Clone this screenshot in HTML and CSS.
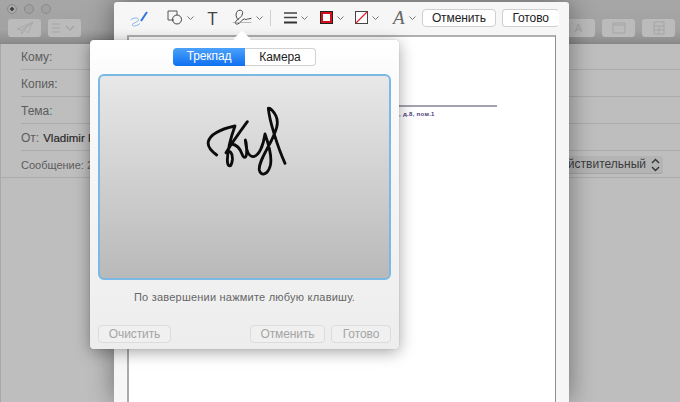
FILE: index.html
```html
<!DOCTYPE html>
<html lang="ru">
<head>
<meta charset="utf-8">
<title>Подпись</title>
<link rel="stylesheet" href="styles.css">
</head>
<body>
<div class="mail">
  <header class="mail-bar">
    <div class="lights"><i class="light light-on"></i><i class="light"></i><i class="light"></i></div>
    <div class="mail-tools">
      <div class="mail-left">
        <span class="mbtn mbtn-send"><svg width="18" height="14" viewBox="0 0 18 14"><path d="M1 8 L17 1 L12 12 L8 9 L6 13 L5.500 9 Z M5.500 9 L17 1 M8 9 L17 1" fill="none" stroke="#a9a9a9"/></svg></span>
        <span class="mbtn mbtn-list"><svg width="26" height="10" viewBox="0 0 26 10"><path d="M0 1H8M0 5H8M0 9H8" stroke="#a5a5a5"/><path d="M14 3L18 7L22 3" fill="none" stroke="#a5a5a5" stroke-width="1.500"/></svg></span>
      </div>
      <div class="mail-right">
        <span class="mbtn mbtn-a">A</span>
        <span class="mbtn mbtn-w"><svg width="14" height="12" viewBox="0 0 14 12"><path d="M1 1H13V11H1ZM1 3H13" fill="none" stroke="#a5a5a5"/></svg></span>
        <span class="mbtn mbtn-w"><svg width="12" height="14" viewBox="0 0 12 14"><path d="M1 1H11V13H1ZM1 5H11M1 9H11M6 5V13" fill="none" stroke="#a5a5a5"/></svg></span>
      </div>
    </div>
  </header>
  <div class="row"><span class="lab">Кому:</span></div>
  <div class="row"><span class="lab">Копия:</span></div>
  <div class="row"><span class="lab">Тема:</span></div>
  <div class="row"><span class="lab">От:</span><b class="from">Vladimir K</b></div>
  <div class="row row-last">
    <span class="lab">Сообщение: 2</span>
    <span class="select">Действительный<svg width="9" height="14" viewBox="0 0 9 14"><path d="M1 5L4.500 1.500L8 5M1 9L4.500 12.500L8 9" fill="none" stroke="#333" stroke-width="1.400"/></svg></span>
  </div>
</div>

<section class="sheet">
  <div class="toolbar">
    <svg class="t-sketch" width="18" height="16" viewBox="0 0 18 16"><path d="M.5 9C3 6.500 9 6 8.500 9C8 11 2 12.500 2 14C3 16 8 14.500 10 12.500" fill="none" stroke="#8db2ee" stroke-width="1"/><path d="M11 10L17 1" stroke="#2f74e0" stroke-width="2"/></svg>
    <span class="tool t-shape"><svg width="16" height="15" viewBox="0 0 16 15"><path d="M7 10H1V1H10V5" fill="none" stroke="#555" stroke-width="1"/><circle cx="10" cy="9.500" r="4.500" fill="none" stroke="#444" stroke-width="1"/></svg><svg class="chev" width="7" height="4" viewBox="0 0 7 4"><path d="M.5.500L3.500 3.500L6.500.500" fill="none" stroke="#777"/></svg></span>
    <span class="tool-t">T</span>
    <span class="tool t-sign"><svg width="20" height="17" viewBox="20 15 60 50"><path d="M40 48C28 38 30 18 45 18C58 20 50 38 42 42C30 50 25 60 36 60C45 58 50 45 58 44C62 44 60 50 64 46C68 42 72 46 78 42" fill="none" stroke="#444" stroke-width="3"/><path d="M22 55H78" stroke="#999" stroke-width="2"/></svg><svg class="chev" width="7" height="4" viewBox="0 0 7 4"><path d="M.5.500L3.500 3.500L6.500.500" fill="none" stroke="#777"/></svg></span>
    <i class="tsep"></i>
    <span class="tool t-lines"><svg width="13" height="12" viewBox="0 0 13 12"><path d="M0 1H13M0 5.500H13" stroke="#444" stroke-width="1.300"/><path d="M0 10.500H13" stroke="#333" stroke-width="2"/></svg><svg class="chev" width="7" height="4" viewBox="0 0 7 4"><path d="M.5.500L3.500 3.500L6.500.500" fill="none" stroke="#777"/></svg></span>
    <span class="tool t-border"><i class="sw-red"></i><svg class="chev" width="7" height="4" viewBox="0 0 7 4"><path d="M.5.500L3.500 3.500L6.500.500" fill="none" stroke="#777"/></svg></span>
    <span class="tool t-fill"><svg width="13" height="13" viewBox="0 0 13 13"><rect x=".5" y=".5" width="12" height="12" fill="#fff" stroke="#444"/><path d="M1 12L12 1" stroke="#e0202c" stroke-width="1.200"/></svg><svg class="chev" width="7" height="4" viewBox="0 0 7 4"><path d="M.5.500L3.500 3.500L6.500.500" fill="none" stroke="#777"/></svg></span>
    <span class="tool t-font"><em class="glyph-a">A</em><svg class="chev" width="7" height="4" viewBox="0 0 7 4"><path d="M.5.500L3.500 3.500L6.500.500" fill="none" stroke="#777"/></svg></span>
    <span class="tbtn tbtn-cancel">Отменить</span>
    <span class="tbtn tbtn-done">Готово</span>
  </div>
  <div class="doc">
    <hr class="doc-rule">
    <p class="doc-text">, д.8, пом.1</p>
  </div>
</section>

<section class="pop">
  <i class="pop-arrow"></i>
  <div class="seg"><span class="seg-on">Трекпад</span><span class="seg-off">Камера</span></div>
  <div class="pad">
    <svg class="sig" width="110" height="70" viewBox="0 0 330 210"><path d="M80 135C62 122 52 108 55 95C60 75 90 58 135 48C125 75 113 115 112 150C112 172 124 175 127 150C129 128 118 118 108 128C125 100 150 65 172 35M125 102C140 104 150 115 156 132C162 148 170 145 170 125C170 110 168 95 166 90C168 115 175 140 190 140C208 138 220 105 225 72C235 100 248 145 240 170C232 195 212 200 208 180C205 160 225 130 245 90C258 62 268 40 258 18C252 5 240 -8 235 -5C238 30 262 110 285 160" fill="none" stroke="#0c0c0c" stroke-width="8.500" stroke-linecap="round" stroke-linejoin="round"/></svg>
  </div>
  <p class="hint">По завершении нажмите любую клавишу.</p>
  <div class="pop-actions">
    <span class="pbtn pbtn-clear">Очистить</span>
    <span class="pbtn pbtn-cancel">Отменить</span>
    <span class="pbtn pbtn-done">Готово</span>
  </div>
</section>
</body>
</html>
```

FILE: styles.css
```css
* { box-sizing: border-box; }
html, body { margin: 0; height: 402px; overflow: hidden; }
body { position: relative; width: 680px; font-family: "Liberation Sans", Arial, sans-serif; background: #bebebe; }

.mail { height: 402px; background: #bebebe; border-left: 1px solid #a8a8a8; }
.mail-bar { height: 44px; margin-left: -1px; padding: 4px 5px 0 8px; background: linear-gradient(#a6a6a6, #a2a2a2 30px, #8b8b8b); border-bottom: 1px solid #878787; }
.lights { display: flex; gap: 7px; margin-left: -1px; }
.light { width: 10px; height: 10px; border-radius: 50%; background: #a0a0a0; border: 1px solid #8a8a8a; }
.light-on { background: radial-gradient(circle, #3f3f3f 0 1.500px, #a8a8a8 2px); }
.mail-tools { display: flex; justify-content: space-between; margin-top: 5px; }
.mail-left, .mail-right { display: flex; gap: 7px; }
.mbtn { height: 18px; border-radius: 3px; background: #bbb; display: flex; align-items: center; justify-content: center; color: #a3a3a3; }
.mbtn-send { width: 33px; }
.mbtn-list { width: 33px; }
.mbtn-a { width: 33px; font-size: 11px; }
.mbtn-w { width: 33px; }

.row { height: 27px; margin-left: 20px; border-bottom: 1px solid #ababab; font-size: 12px; line-height: 28px; color: #5c5c5c; display: flex; justify-content: space-between; }
.row:first-of-type { height: 26px; line-height: 26px; }
.lab { flex: none; }
.from { flex: 1; margin-left: 4px; font-size: 11.500px; font-weight: normal; color: #2b2b2b; -webkit-text-stroke: .2px #2b2b2b; }
.row-last { margin-left: -1px; padding-left: 21px; }
.row-last .lab { font-size: 11px; }
.select { width: 118px; height: 17px; margin: 5px 17px 0 0; padding: 0 3px 0 0; background: #b4b4b4; border-radius: 3px; box-shadow: 0 1px 0 #a5a5a5; color: #3c3c3c; font-size: 12px; line-height: 17px; display: flex; justify-content: flex-end; align-items: center; gap: 5px; white-space: nowrap; }

.sheet { position: absolute; left: 114px; top: 2px; width: 455px; height: 400px; background: #f6f6f6; border-radius: 3px 3px 0 0; box-shadow: 0 0 26px rgba(0,0,0,.42); display: flex; flex-direction: column; }
.toolbar { height: 33px; flex: none; padding: 0 10px 2px 16px; display: flex; align-items: center; }
.t-sketch { flex: none; margin-top: 2px; }
.tool { display: flex; align-items: center; gap: 4px; flex: none; }
.t-shape { margin-left: 19px; }
.tool-t { margin-left: 13px; font-family: "Open Sans", sans-serif; font-weight: 400; font-size: 18px; color: #444; width: 11px; line-height: 20px; text-align: center; }
.t-sign { margin-left: 14px; }
.tsep { width: 1px; height: 16px; background: #d0d0d0; margin: 0 13px 0 7px; }
.t-border { margin-left: 12px; }
.sw-red { display: block; width: 13px; height: 13px; border: 3px solid #d4101c; outline: 1px solid #222; outline-offset: -1px; background: #fff; }
.t-fill { margin-left: 11px; }
.t-font { margin-left: 14px; }
.glyph-a { font-family: "Liberation Serif", serif; font-size: 19px; color: #666; line-height: 20px; }
.tbtn { height: 18px; margin-top: 1px; background: #fff; border: 1px solid #cfcfcf; border-radius: 4px; font-size: 12px; letter-spacing: -.1px; line-height: 16px; text-align: center; color: #222; }
.tbtn-cancel { width: 75px; margin-left: 6px; }
.tbtn-done { width: 57px; margin-left: 6px; border-right-color: transparent; }

.doc { flex: 1; margin: 0 13px; background: #fff; border: 1px solid #8e8e8e; border-left: 2px solid #aaa; border-top: 2px solid #b0b0b0; border-bottom: 0; padding: 68px 58px 0 0; }
.doc-rule { margin: 0; height: 2px; border: 0; background: #a5a2b0; }
.doc-text { margin: 3px 0 0; padding-left: 270px; font-size: 6px; font-weight: bold; line-height: 8px; letter-spacing: .3px; color: #4d3b7d; }

.pop { position: absolute; left: 90px; top: 40px; width: 309px; height: 309px; border-radius: 4px; background: linear-gradient(#fff, #fbfbfb 34px, #ededed); box-shadow: 0 3px 16px rgba(0,0,0,.36), 0 0 1px rgba(0,0,0,.35); padding: 8px 8px 0; }
.pop-arrow { position: absolute; left: 146px; top: -7px; width: 12px; height: 12px; background: #fff; transform: rotate(45deg); }
.seg { position: relative; display: flex; width: 143px; height: 18px; margin: 0 auto 0 75px; font-size: 12px; letter-spacing: -.1px; line-height: 17px; text-align: center; }
.seg-on { width: 72px; border-radius: 4px 0 0 4px; background: linear-gradient(#4ba2fb, #0f6ff0); color: #fff; }
.seg-off { width: 71px; border: 1px solid #d2d2d2; border-left: 0; border-radius: 0 4px 4px 0; background: #fff; color: #222; line-height: 16px; }
.pad { width: 293px; height: 206px; margin-top: 8px; border: 2px solid #7ab9e3; border-radius: 6px; background: linear-gradient(#e8e8e8, #b9b9b9); padding: 34px 0 0 90px; }
.sig { display: block; overflow: visible; }
.hint { margin: 10px 0 0; font-size: 11px; line-height: 14px; text-align: center; color: #666; letter-spacing: .22px; }
.pop-actions { display: flex; margin-top: 21px; }
.pbtn { height: 18px; border: 1px solid #dcdcdc; border-radius: 4px; background: #f0f0f0; color: #a5a5a5; font-size: 12px; letter-spacing: -.1px; line-height: 16px; text-align: center; }
.pbtn-clear { width: 73px; margin-right: 79px; }
.pbtn-cancel { width: 75px; margin-right: 6px; }
.pbtn-done { width: 60px; }
```
